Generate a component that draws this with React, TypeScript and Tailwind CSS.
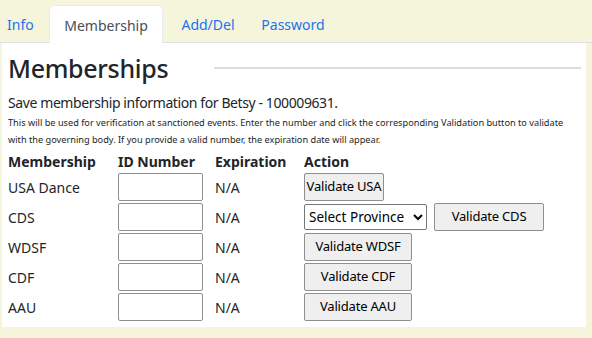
import React from 'react'

const rows = [
  { name: 'USA Dance', action: 'Validate USA' },
  { name: 'CDS', action: 'Validate CDS', province: true },
  { name: 'WDSF', action: 'Validate WDSF' },
  { name: 'CDF', action: 'Validate CDF' },
  { name: 'AAU', action: 'Validate AAU' },
]

const tabs = ['Info', 'Membership', 'Add/Del', 'Password']

const Btn = ({ children, w }: { children: React.ReactNode; w: string }) => (
  <button className={`h-[28px] ${w} whitespace-nowrap px-0 rounded-[2px] border border-[#8f8f8f] bg-[#efefef] text-[13px] tracking-[-0.2px] text-black`}>
    {children}
  </button>
)

export default function App() {
  return (
    <div className="w-[592px] h-[338px] overflow-hidden bg-[#f5f5dc] text-[#212529]" style={{ fontFamily: '"Noto Sans", "Open Sans", sans-serif' }}>
      <div className="flex h-[43px] items-end border-b border-[#dee2e6] text-[14px]">
        {tabs.map((t) => (
          <div
            key={t}
            className={
              t === 'Membership'
                ? 'h-[38px] w-[114px] pt-[2px] flex items-center justify-center rounded-t-[5px] bg-white text-[#495057] border border-b-0 border-[#e9ecef] mb-[-1px]'
                : 'h-[38px] pt-[2px] flex items-center px-[7px] text-[#1a73f0] ' + (t === 'Info' ? 'w-[49px]' : t === 'Add/Del' ? 'w-[90px] justify-center' : 'w-[80px] justify-center')
            }
          >
            {t}
          </div>
        ))}
      </div>
      <div className="ml-[2px] mr-[6px] h-[284px] bg-white px-[6px]">
        <div className="flex items-center h-[50px]">
          <h1 className="text-[25px] tracking-[-0.3px] font-medium leading-none text-[#212529] w-[206px]">Memberships</h1>
          <div className="flex-1 h-[2px] bg-[#dcdcdc] mr-[-1px]" />
        </div>
        <p className="text-[14px] tracking-[-0.4px] leading-[20px] text-[#212529]">Save membership information for Betsy - 100009631.</p>
        <p className="text-[9.2px] leading-[17px] text-[#212529] mt-[1px] whitespace-nowrap">
          This will be used for verification at sanctioned events. Enter the number and click the corresponding Validation button to validate
          <br />
          with the governing body. If you provide a valid number, the expiration date will appear.
        </p>
        <table className="mt-[2px] text-[14px] border-collapse">
          <thead>
            <tr className="h-[22px] text-left">
              <th className="w-[110px] p-0 font-bold">Membership</th>
              <th className="w-[97px] p-0 font-bold">ID Number</th>
              <th className="w-[89px] p-0 font-bold">Expiration</th>
              <th className="p-0 font-bold">Action</th>
            </tr>
          </thead>
          <tbody>
            {rows.map((r) => (
              <tr key={r.name} className="h-[30px]">
                <td className="p-0">{r.name}</td>
                <td className="p-0">
                  <input className="block h-[28px] w-[85px] rounded-[2px] border border-[#8f8f8f] bg-white" />
                </td>
                <td className="p-0">N/A</td>
                <td className="p-0">
                  {r.province ? (
                    <div className="flex items-center gap-[7px]">
                      <select className="h-[26px] w-[123px] rounded-[2px] border border-[#767676] bg-white text-[13.5px] text-black">
                        <option>Select Province</option>
                      </select>
                      <Btn w="w-[110px]">{r.action}</Btn>
                    </div>
                  ) : (
                    <Btn w={r.action === 'Validate USA' ? 'w-[80px]' : 'w-[108px]'}>{r.action}</Btn>
                  )}
                </td>
              </tr>
            ))}
          </tbody>
        </table>
      </div>
    </div>
  )
}
